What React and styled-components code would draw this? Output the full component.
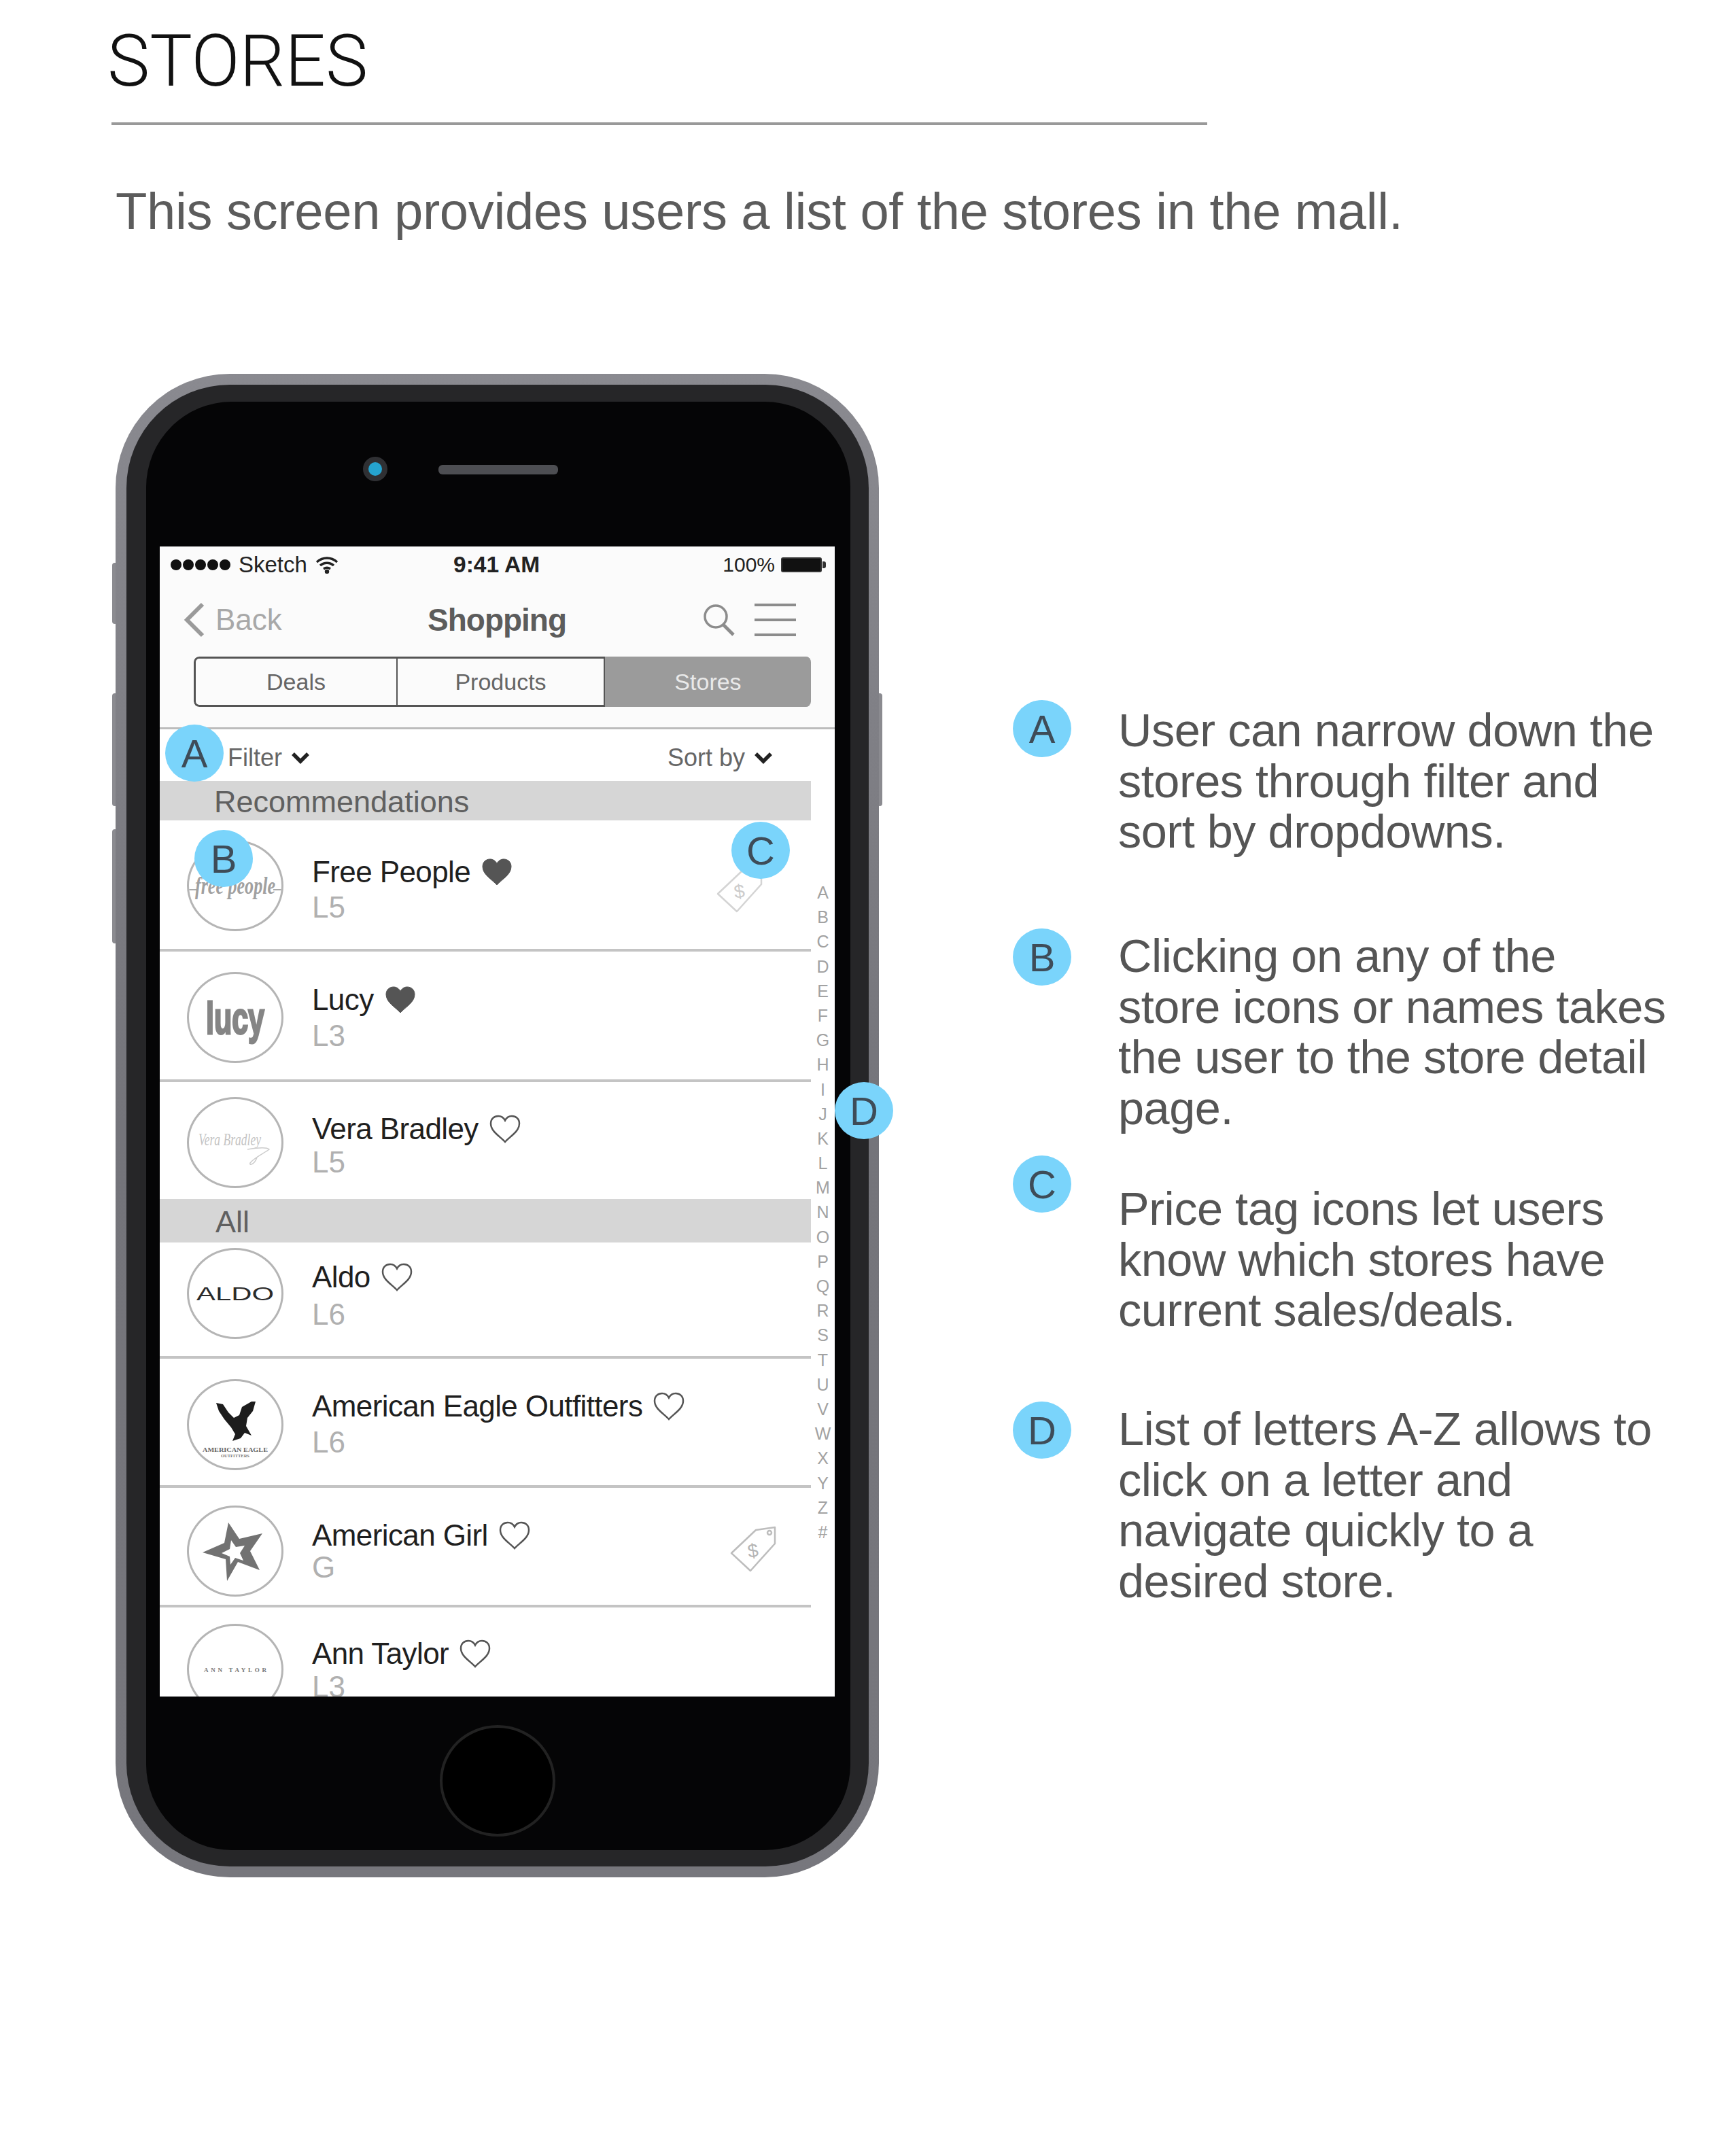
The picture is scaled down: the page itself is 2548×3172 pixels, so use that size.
import React from "react";
import styled, { createGlobalStyle } from "styled-components";

const GlobalStyle = createGlobalStyle`
  html, body { margin: 0; padding: 0; background: #fff; }
  * { box-sizing: border-box; }
  body { font-family: "Liberation Sans", Arial, sans-serif; }
`;

const Page = styled.div`
  width: 2548px;
  height: 3172px;
  overflow: hidden;
  background: #fff;
`;

const Header = styled.header`
  padding: 36px 0 0 160px;
  height: 550px;
`;

const Title = styled.h1`
  margin: 0 0 0 -2px;
  font-family: Roboto, "Liberation Sans", sans-serif;
  font-size: 105px;
  line-height: 110px;
  font-weight: 300;
  color: #111;
`;

const Rule = styled.div`
  width: 1612px;
  height: 4px;
  margin: 34px 0 0 4px;
  background: #999;
`;

const Lead = styled.p`
  margin: 82px 0 0 10px;
  font-size: 76px;
  line-height: 90px;
  color: #5c5c5c;
  letter-spacing: -0.33px;
`;

const Main = styled.main`
  position: relative;
  z-index: 0;
  display: flex;
  padding-left: 170px;
`;

const Phone = styled.div`
  position: relative;
  width: 1123px;
  height: 2212px;
  padding: 16px 15px 16px 16px;
  border-radius: 168px;
  background: linear-gradient(180deg, #8a8a90, #74747a 50%, #77777d);
`;

const SideKey = styled.div`
  position: absolute;
  width: 8px;
  top: ${(p) => p.$top}px;
  height: ${(p) => p.$h}px;
  ${(p) => (p.$right ? "right: -5px;" : "left: -5px;")}
  background: #8b8b90;
  border-radius: 4px;
  z-index: -1;
`;

const Bezel = styled.div`
  height: 100%;
  padding: 25px 27px 24px 29px;
  border-radius: 152px;
  background: #262628;
`;

const Face = styled.div`
  height: 100%;
  padding: 0 23px 0 20px;
  border-radius: 126px;
  background: #050506;
  display: flex;
  flex-direction: column;
`;

const Earpiece = styled.div`
  height: 213px;
  padding: 81px 0 0 299px;
  display: flex;
  align-items: flex-start;
  gap: 75px;
`;

const Camera = styled.div`
  width: 36px;
  height: 36px;
  border-radius: 50%;
  background: #25a4cf;
  border: 8px solid #2f3033;
`;

const Speaker = styled.div`
  width: 176px;
  height: 14px;
  margin-top: 12px;
  border-radius: 6px;
  background: #4d4e52;
`;

const Screen = styled.div`
  height: 1692px;
  overflow: hidden;
  background: #fff;
  color: #555;
`;

const TopArea = styled.div`
  height: 269px;
  background: #fbfbfb;
  border-bottom: 3px solid #bcbcbc;
`;

const StatusBar = styled.div`
  position: relative;
  height: 54px;
  padding: 0 13px 0 16px;
  display: flex;
  align-items: center;
  font-size: 30px;
  color: #222;
`;

const Dots = styled.div`
  display: flex;
  gap: 2px;
  margin-right: 12px;
`;

const Dot = styled.span`
  width: 16px;
  height: 16px;
  border-radius: 50%;
  background: #111;
`;

const Carrier = styled.span`
  font-size: 33px;
`;

const Clock = styled.span`
  position: absolute;
  left: 432px;
  font-weight: 700;
  font-size: 33.500px;
`;

const BatteryText = styled.span`
  margin-left: auto;
  margin-right: 9px;
`;

const Battery = styled.span`
  width: 60px;
  height: 22px;
  background: #111;
  border: 2px solid #333;
  border-radius: 3px;
`;

const BatteryCap = styled.span`
  width: 5px;
  height: 10px;
  margin-left: 1px;
  background: #333;
  border-radius: 0 3px 3px 0;
`;

const NavBar = styled.div`
  position: relative;
  height: 108px;
  padding: 0 57px 0 34px;
  display: flex;
  align-items: center;
`;

const Back = styled.span`
  margin-left: 16px;
  font-size: 44px;
  color: #a8a8a8;
`;

const NavTitle = styled.span`
  position: absolute;
  left: 394px;
  width: 202px;
  white-space: nowrap;
  text-align: center;
  font-size: 46px;
  font-weight: 700;
  letter-spacing: -1px;
  color: #5c5c5c;
`;

const NavIcons = styled.div`
  margin-left: auto;
  display: flex;
  align-items: center;
  gap: 28px;
`;

const Segments = styled.div`
  width: 908px;
  height: 74px;
  margin-left: 50px;
  display: grid;
  grid-template-columns: 300px 305px 1fr;
  border-radius: 8px;
  overflow: hidden;
`;

const Segment = styled.div`
  display: flex;
  align-items: center;
  justify-content: center;
  font-size: 34px;
  background: ${(p) => (p.$active ? "#9b9b9b" : "#fbfbfb")};
  color: ${(p) => (p.$active ? "#e9e9e9" : "#666")};
  border: 3px solid ${(p) => (p.$active ? "#9b9b9b" : "#555")};
  border-left-width: ${(p) => (p.$first ? 3 : 0)}px;
  border-right-width: ${(p) => (p.$active ? 0 : 2)}px;
  border-radius: ${(p) => (p.$first ? "8px 0 0 8px" : "0")};
`;

const FilterRow = styled.div`
  height: 76px;
  padding: 7px 92px 0 100px;
  display: flex;
  align-items: center;
  justify-content: space-between;
  font-size: 36px;
  color: #666;
`;

const FilterItem = styled.span`
  display: inline-flex;
  align-items: center;
  gap: 14px;
`;

const Body = styled.div`
  display: flex;
`;

const List = styled.div`
  width: 958px;
  flex: none;
`;

const Band = styled.div`
  height: ${(p) => p.$h}px;
  padding: 3px 0 0 ${(p) => p.$pad}px;
  display: flex;
  align-items: center;
  background: #d6d6d6;
  font-size: 45px;
  color: #606060;
`;

const Row = styled.div`
  height: ${(p) => p.$h}px;
  padding-left: 40px;
  display: flex;
  align-items: flex-start;
  border-bottom: ${(p) => (p.$line ? "4px solid #c4c4c4" : "none")};
`;

const LogoCircle = styled.div`
  width: 142px;
  height: 134px;
  flex: none;
  margin-top: ${(p) => p.$top}px;
  border: 3px solid #b5b5b5;
  border-radius: 50%;
  overflow: hidden;
  display: flex;
  align-items: center;
  justify-content: center;
`;

const RowText = styled.div`
  margin: ${(p) => p.$top}px 0 0 42px;
`;

const StoreName = styled.div`
  display: flex;
  align-items: center;
  gap: 16px;
  height: 52px;
  font-size: 44px;
  letter-spacing: -0.6px;
  color: #1f1f1f;
`;

const StoreLevel = styled.div`
  height: 52px;
  margin-top: ${(p) => p.$gap}px;
  line-height: 52px;
  font-size: 44px;
  color: #b0b0b0;
`;

const TagSlot = styled.div`
  margin: ${(p) => p.$top}px ${(p) => p.$right}px 0 auto;
`;

const Alphabet = styled.div`
  flex: 1;
  padding-top: 146px;
  display: flex;
  flex-direction: column;
  align-items: center;
`;

const Letter = styled.span`
  height: 36.2px;
  line-height: 36px;
  font-size: 25px;
  color: #a2a2a2;
`;

const HomeArea = styled.div`
  flex: 1;
  display: flex;
  justify-content: center;
  padding-top: 42px;
`;

const HomeButton = styled.div`
  width: 170px;
  height: 164px;
  border-radius: 50%;
  border: 4px solid #222;
  background: #000;
`;

const Marker = styled.div`
  width: 86px;
  height: 84px;
  flex: none;
  border-radius: 50%;
  background: #7ad4fb;
  display: flex;
  align-items: center;
  justify-content: center;
  font-size: 58px;
  color: #3e4c58;
`;

const PhoneMarker = styled(Marker)`
  position: absolute;
  left: ${(p) => p.$x}px;
  top: ${(p) => p.$y}px;
`;

const Notes = styled.section`
  margin: 480px 0 0 197px;
  display: flex;
  flex-direction: column;
`;

const Note = styled.div`
  position: relative;
  height: ${(p) => p.$h}px;
  display: grid;
  grid-template-columns: 86px 1fr;
  column-gap: 69px;
  align-items: start;
`;

const NoteText = styled.p`
  margin: ${(p) => p.$top || 0}px 0 0;
  font-size: 68.500px;
  line-height: 74.700px;
  letter-spacing: -0.5px;
  white-space: nowrap;
  color: #555;
`;

const Heart = ({ filled }) => (
  <svg width="46" height="42" viewBox="0 0 46 42">
    <path
      d="M23 40C16 32 2 25 2 13 2 6 7 2 13 2c4.500 0 8 2.500 10 6.500C25 4.500 28.500 2 33 2c6 0 11 4 11 11 0 12-14 19-21 27z"
      fill={filled ? "#555" : "#fff"}
      stroke="#555"
      strokeWidth={filled ? 1 : 2.5}
    />
  </svg>
);

const PriceTag = ({ faded }) => (
  <svg width="70" height="68" viewBox="0 0 70 68" fill="none" stroke={faded ? "#d4d4d4" : "#bdbdbd"} strokeWidth="2.500">
    <path d="M2 40 38 6 66 2 66 26 30 66z" strokeLinejoin="round" />
    <circle cx="58" cy="10" r="3" />
    <text x="26" y="46" fontSize="28" fontFamily="Liberation Sans" fill={faded ? "#ccc" : "#b5b5b5"} stroke="none" transform="rotate(-8 34 38)">$</text>
  </svg>
);

const Chevron = () => (
  <svg width="26" height="18" viewBox="0 0 26 18" fill="none" stroke="#222" strokeWidth="5.500">
    <path d="M2 3l11 11L24 3" />
  </svg>
);

const FreeLogo = () => (
  <svg width="136" height="128" viewBox="0 0 136 128">
    <path d="M0 70h12M124 70h12" stroke="#aaa" strokeWidth="2" />
    <text x="68" y="76" textAnchor="middle" fontFamily="Liberation Serif" fontStyle="italic" fontWeight="700" fontSize="36" fill="#a0a0a0" textLength="118" lengthAdjust="spacingAndGlyphs">free people</text>
  </svg>
);

const LucyLogo = () => (
  <svg width="136" height="128" viewBox="0 0 136 128">
    <text x="68" y="88" textAnchor="middle" fontFamily="Liberation Sans" fontWeight="700" fontSize="66" fill="#858585" stroke="#858585" strokeWidth="3" textLength="86" lengthAdjust="spacingAndGlyphs">lucy</text>
  </svg>
);

const VeraLogo = () => (
  <svg width="136" height="128" viewBox="0 0 136 128">
    <text x="60" y="68" textAnchor="middle" fontFamily="Liberation Serif" fontStyle="italic" fontSize="26" fill="#c4c4c4" textLength="92" lengthAdjust="spacingAndGlyphs">Vera Bradley</text>
    <path d="M86 74c12-2 28-4 32 0-8 6-22 12-28 20-2 4 6 3 10-8" fill="none" stroke="#ccc" strokeWidth="1.500" />
  </svg>
);

const AldoLogo = () => (
  <svg width="136" height="128" viewBox="0 0 136 128">
    <text x="68" y="74" textAnchor="middle" fontFamily="Liberation Sans" fontSize="27" fill="#2b2b2b" textLength="114" lengthAdjust="spacingAndGlyphs">ALDO</text>
  </svg>
);

const EagleLogo = () => (
  <svg width="136" height="128" viewBox="0 0 136 128">
    <path d="M40 32 50 34 58 46 66 54 74 50 78 38 92 30 98 30 94 44 86 54 84 66 92 80 82 76 76 84 64 88 68 78 62 68 52 56 44 44z" fill="#1d1d1d" />
    <text x="68" y="104" textAnchor="middle" fontFamily="Liberation Serif" fontWeight="700" fontSize="8" fill="#666" textLength="96" lengthAdjust="spacingAndGlyphs">AMERICAN EAGLE</text>
    <text x="68" y="112" textAnchor="middle" fontFamily="Liberation Serif" fontWeight="700" fontSize="6" fill="#777" textLength="42" lengthAdjust="spacingAndGlyphs">OUTFITTERS</text>
  </svg>
);

const StarLogo = () => (
  <svg width="136" height="128" viewBox="0 0 136 128">
    <path d="M58 22 74 46 108 38 90 64 104 92 72 80 56 108 54 76 20 66 52 52z" fill="#727272" />
    <path d="M62 48 69 58 82 56 75 67 80 78 68 74 61 84 60 72 48 67 60 61z" fill="#fff" />
  </svg>
);

const AnnLogo = () => (
  <svg width="136" height="128" viewBox="0 0 136 128">
    <text x="68" y="68" textAnchor="middle" fontFamily="Liberation Serif" fontWeight="700" fontSize="9" fill="#777" textLength="92" lengthAdjust="spacing">ANN TAYLOR</text>
  </svg>
);

const letters = "ABCDEFGHIJKLMNOPQRSTUVWXYZ#".split("");

const recommended = [
  { name: "Free People", level: "L5", h: 193, logo: 29, text: 50, gap: 0, filled: true, line: true, Logo: FreeLogo, tag: { top: 68, right: 69, faded: true } },
  { name: "Lucy", level: "L3", h: 192, logo: 30, text: 45, gap: 1, filled: true, line: true, Logo: LucyLogo },
  { name: "Vera Bradley", level: "L5", h: 172, logo: 22, text: 43, gap: -3, Logo: VeraLogo },
];

const allStores = [
  { name: "Aldo", level: "L6", h: 171, logo: 8, text: 25, gap: 3, line: true, Logo: AldoLogo },
  { name: "American Eagle Outfitters", level: "L6", h: 190, logo: 30, text: 44, gap: 1, line: true, Logo: EagleLogo },
  { name: "American Girl", level: "G", h: 176, logo: 26, text: 44, gap: -5, line: true, Logo: StarLogo, tag: { top: 56, right: 49 } },
  { name: "Ann Taylor", level: "L3", h: 140, logo: 24, text: 42, gap: -3, Logo: AnnLogo },
];

const StoreRow = ({ store }) => {
  const { Logo, tag } = store;
  return (
    <Row $h={store.h} $line={store.line}>
      <LogoCircle $top={store.logo}>
        <Logo />
      </LogoCircle>
      <RowText $top={store.text}>
        <StoreName>
          {store.name}
          <Heart filled={store.filled} />
        </StoreName>
        <StoreLevel $gap={store.gap}>{store.level}</StoreLevel>
      </RowText>
      {tag && (
        <TagSlot $top={tag.top} $right={tag.right}>
          <PriceTag faded={tag.faded} />
        </TagSlot>
      )}
    </Row>
  );
};

const App = () => {
  return (
    <Page>
      <GlobalStyle />
      <Header>
        <Title>STORES</Title>
        <Rule />
        <Lead>This screen provides users a list of the stores in the mall.</Lead>
      </Header>
      <Main>
        <Phone>
          <SideKey $top={278} $h={90} />
          <SideKey $top={470} $h={166} />
          <SideKey $top={670} $h={168} />
          <SideKey $right $top={470} $h={166} />
          <Bezel>
            <Face>
              <Earpiece>
                <Camera />
                <Speaker />
              </Earpiece>
              <Screen>
                <TopArea>
                  <StatusBar>
                    <Dots>
                      <Dot /><Dot /><Dot /><Dot /><Dot />
                    </Dots>
                    <Carrier>Sketch</Carrier>
                    <svg width="34" height="26" viewBox="0 0 34 26" fill="none" stroke="#222" strokeWidth="3.500" style={{ marginLeft: 12 }}>
                      <path d="M2 9c9-8 21-8 30 0M7 14c6-5 14-5 20 0M12 19c3-2 7-2 10 0" />
                      <circle cx="17" cy="23" r="1.500" fill="#222" />
                    </svg>
                    <Clock>9:41 AM</Clock>
                    <BatteryText>100%</BatteryText>
                    <Battery />
                    <BatteryCap />
                  </StatusBar>
                  <NavBar>
                    <svg width="32" height="52" viewBox="0 0 32 52" fill="none" stroke="#9a9a9a" strokeWidth="6">
                      <path d="M29 3 6 26l23 23" />
                    </svg>
                    <Back>Back</Back>
                    <NavTitle>Shopping</NavTitle>
                    <NavIcons>
                      <svg width="48" height="48" viewBox="0 0 48 48" fill="none" stroke="#8c8c8c" strokeWidth="3.500">
                        <circle cx="19" cy="19" r="16" />
                        <path d="M30 31l15 15" strokeWidth="5" />
                      </svg>
                      <svg width="61" height="50" viewBox="0 0 61 50" fill="none" stroke="#8c8c8c" strokeWidth="4">
                        <path d="M0 3h61M0 25h61M0 47h61" />
                      </svg>
                    </NavIcons>
                  </NavBar>
                  <Segments>
                    <Segment $first>Deals</Segment>
                    <Segment>Products</Segment>
                    <Segment $active>Stores</Segment>
                  </Segments>
                </TopArea>
                <FilterRow>
                  <FilterItem>Filter <Chevron /></FilterItem>
                  <FilterItem>Sort by <Chevron /></FilterItem>
                </FilterRow>
                <Body>
                  <List>
                    <Band $h={58} $pad={80}>Recommendations</Band>
                    {recommended.map((store) => (
                      <StoreRow key={store.name} store={store} />
                    ))}
                    <Band $h={64} $pad={82}>All</Band>
                    {allStores.map((store) => (
                      <StoreRow key={store.name} store={store} />
                    ))}
                  </List>
                  <Alphabet>
                    {letters.map((letter) => (
                      <Letter key={letter}>{letter}</Letter>
                    ))}
                  </Alphabet>
                </Body>
              </Screen>
              <HomeArea>
                <HomeButton />
              </HomeArea>
            </Face>
          </Bezel>
          <PhoneMarker $x={73} $y={516}>A</PhoneMarker>
          <PhoneMarker $x={116} $y={671}>B</PhoneMarker>
          <PhoneMarker $x={906} $y={659}>C</PhoneMarker>
          <PhoneMarker $x={1058} $y={1042}>D</PhoneMarker>
        </Phone>
        <Notes>
          <Note $h={336}>
            <Marker>A</Marker>
            <NoteText $top={8}>User can narrow down the<br />stores through filter and<br />sort by dropdowns.</NoteText>
          </Note>
          <Note $h={334}>
            <Marker>B</Marker>
            <NoteText $top={4}>Clicking on any of the<br />store icons or names takes<br />the user to the store detail<br />page.</NoteText>
          </Note>
          <Note $h={362}>
            <Marker>C</Marker>
            <NoteText $top={42}>Price tag icons let users<br />know which stores have<br />current sales/deals.</NoteText>
          </Note>
          <Note $h={340}>
            <Marker>D</Marker>
            <NoteText $top={4}>List of letters A-Z allows to<br />click on a letter and<br />navigate quickly to a<br />desired store.</NoteText>
          </Note>
        </Notes>
      </Main>
    </Page>
  );
};

export default App;
